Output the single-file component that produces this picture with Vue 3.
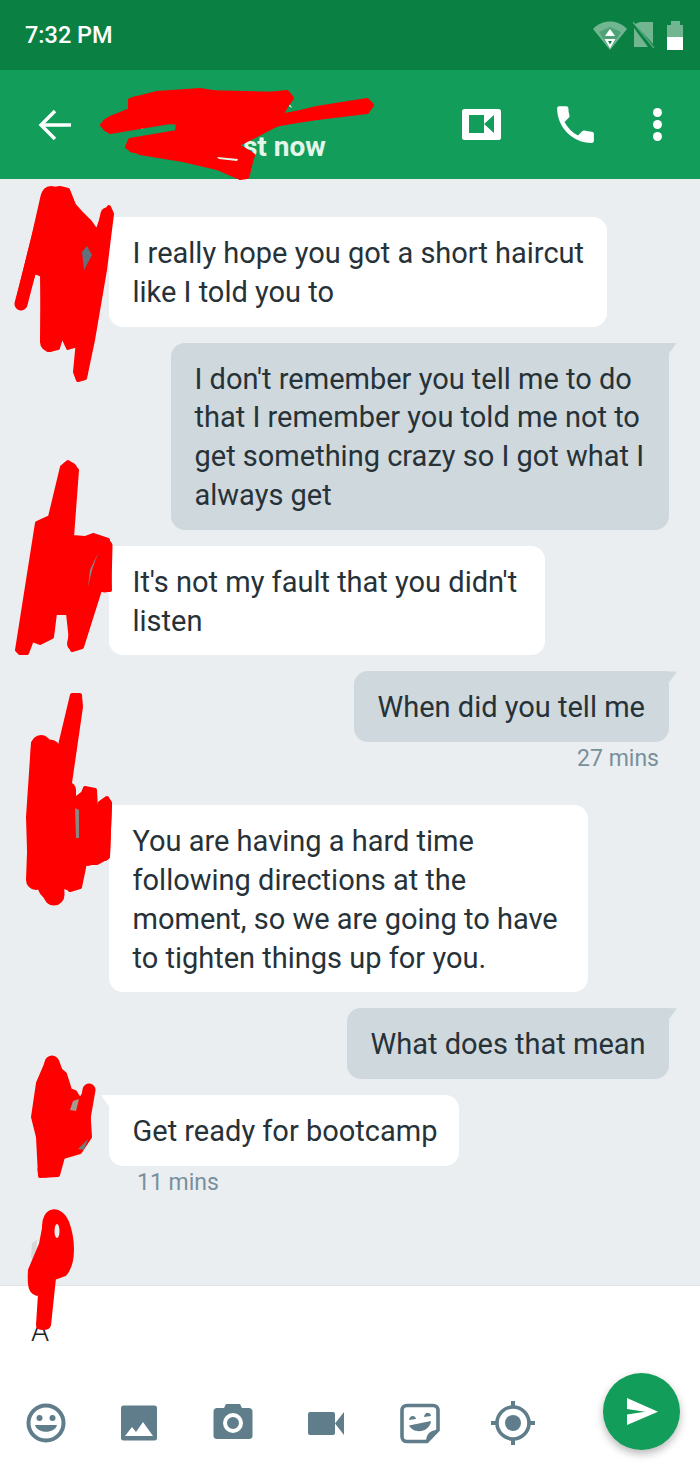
<script setup>
const messages = [
  { id: 1, side: 'in', width: 498, lines: ['I really hope you got a short haircut', 'like I told you to'] },
  {
    id: 2,
    side: 'out',
    width: 498,
    lines: [
      "I don't remember you tell me to do",
      'that I remember you told me not to',
      'get something crazy so I got what I',
      'always get'
    ]
  },
  { id: 3, side: 'in', width: 436, lines: ["It's not my fault that you didn't", 'listen'] },
  { id: 4, side: 'out', width: 315, lines: ['When did you tell me'], time: '27 mins' },
  {
    id: 5,
    side: 'in',
    width: 479,
    lines: [
      'You are having a hard time',
      'following directions at the',
      'moment, so we are going to have',
      'to tighten things up for you.'
    ]
  },
  { id: 6, side: 'out', width: 322, lines: ['What does that mean'] },
  { id: 7, side: 'in', width: 350, lines: ['Get ready for bootcamp'], time: '11 mins' }
]

// marker scribbles over the avatars and the contact name: [path, pen width]
const strokes = [
  // name
  ['M109 125 170 112 230 104', 15],
  ['M137 103 200 97 285 99', 14],
  ['M250 125 320 113 366 105', 12],
  ['M134 146 180 139 240 163', 14],
  ['M185 147 243 171', 13],
  ['M246 156 244 172', 13],
  // avatar 1
  ['M21 304 35 250 47 197', 13],
  ['M51 196 50 342', 20],
  ['M63 196 72 340', 17],
  ['M107 214 95 270 81 374', 13],
  // avatar 2
  ['M69 470 55 540', 17],
  ['M23 647 44 525', 13],
  ['M74 644 85 590 97 545', 14],
  ['M106 546 105 586', 13],
  // avatar 3
  ['M76 699 62 790', 12],
  ['M41 745 36 880', 20],
  ['M50 750 54 895', 21],
  ['M68 790 68 882', 16],
  ['M89 795 88 860', 12],
  ['M106 804 104 855', 12],
  // avatar 4
  ['M89 1090 82 1130', 13],
  ['M52 1063 60 1085', 15],
  ['M45 1170 52 1168', 15]
]

const masses = [
  'M130 100 157 93 200 90 230 95 260 95 287 92 292 98 287 105 280 117 317 108 367 100 372 105 367 112 317 118 280 123 253 137 237 145 253 155 247 177 240 178 217 168 183 160 140 153 127 147 130 140 177 132 178 123 170 122 110 132 102 125 110 118 130 110Z',
  'M46 190 60 188 68 190 74 205 82 214 90 222 97 232 103 215 109 207 112 214 105 270 93 340 85 378 78 380 75 372 80 320 76 345 68 348 62 335 58 348 48 350 44 340 42 275 34 272 24 306 17 304 30 250Z',
  'M17 650 37 523 50 517 62 467 68 462 77 470 72 537 85 538 93 535 108 540 110 590 100 590 82 647 72 650 68 613 55 613 52 637 40 643 32 640 27 653 20 653Z',
  'M72 695 80 695 81 707 70 783 74 800 83 793 85 788 95 790 97 827 100 803 107 798 110 803 108 857 97 863 85 863 80 887 70 890 63 883 60 900 50 902 42 893 38 885 30 883 28 817 33 743 42 738 53 745 57 758Z',
  'M47 1062 58 1068 65 1074 70 1090 75 1092 80 1100 87 1090 90 1137 80 1152 63 1157 58 1175 40 1176 38 1137 33 1117 38 1083Z',
  'M44 1228C43 1208 60 1206 67 1222 73 1238 75 1262 65 1274L54 1278 49 1325C48 1329 38 1329 38 1325L40 1294C30 1294 29 1286 30 1270L41 1244Z'
]
</script>

<template>
  <div class="phone">
    <div class="status-bar">
      <span class="clock">7:32 PM</span>
      <div class="status-icons">
        <svg width="34" height="30" viewBox="0 0 34 30" aria-hidden="true">
          <path d="M0 9C9 -1 25 -1 34 9L17 30Z" fill="#fff" opacity=".42" />
          <path d="M6 12 17 29 28 12 17 7Z" fill="#0b8043" opacity=".35" />
          <path d="M17 9 22 16H12Z" fill="#fff" />
          <path d="M11.5 19H22.5L17 28.5Z" fill="#fff" />
          <path d="M15 21H19L17 24.5Z" fill="#0b8043" />
        </svg>
        <svg class="sim" width="22" height="28" viewBox="0 0 22 28" aria-hidden="true">
          <path d="M7 1H20V23L2 3Z" fill="#fff" opacity=".42" />
          <path d="M1 7 15 26H1Z" fill="#fff" opacity=".42" />
          <path d="M0 1 21 27" stroke="#fff" stroke-opacity=".3" stroke-width="1.5" />
        </svg>
        <div class="battery">
          <span class="battery-nub"></span>
          <span class="battery-empty"></span>
          <span class="battery-full"></span>
        </div>
      </div>
    </div>

    <header class="app-bar">
      <svg class="back" width="34" height="32" viewBox="0 0 34 32" aria-hidden="true">
        <path d="M33 16H3M17 2 3 16 17 30" fill="none" stroke="#fff" stroke-width="3.4" />
      </svg>
      <div class="contact">
        <span class="presence">just now</span>
      </div>
      <div class="bar-actions">
        <svg width="39" height="31" viewBox="0 0 39 31" aria-hidden="true">
          <rect width="39" height="31" rx="2.5" fill="#fff" />
          <path d="M7 6H22V24H7ZM22 15 32 6V24Z" fill="#129d5a" />
        </svg>
        <svg class="call" width="49" height="49" viewBox="0 0 24 24" aria-hidden="true">
          <path
            d="M6.62 10.79c1.44 2.83 3.76 5.14 6.59 6.59l2.2-2.2c.27-.27.67-.36 1.02-.24 1.12.37 2.33.57 3.57.57.55 0 1 .45 1 1V20c0 .55-.45 1-1 1-9.39 0-17-7.61-17-17 0-.55.45-1 1-1h3.5c.55 0 1 .45 1 1 0 1.25.2 2.45.57 3.57.11.35.03.74-.25 1.02l-2.2 2.2z"
            fill="#fff"
          />
        </svg>
        <div class="overflow">
          <span></span><span></span><span></span>
        </div>
      </div>
    </header>

    <main class="thread">
      <template v-for="msg in messages" :key="msg.id">
        <div class="bubble" :class="msg.side" :style="{ width: msg.width + 'px' }">
          <span v-for="line in msg.lines" :key="line" class="line">{{ line }}</span>
        </div>
        <div v-if="msg.time" class="time" :class="msg.side">{{ msg.time }}</div>
      </template>
    </main>

    <footer class="composer">
      <div class="draft">A</div>
      <div class="tools">
        <svg width="44" height="44" viewBox="0 0 44 44" aria-hidden="true">
          <circle cx="22" cy="22" r="17.5" fill="none" stroke="#607d8b" stroke-width="4" />
          <circle cx="15.5" cy="17" r="3" fill="#607d8b" />
          <circle cx="28.5" cy="17" r="3" fill="#607d8b" />
          <path d="M11 24H33C31 33 13 33 11 24Z" fill="#607d8b" />
        </svg>
        <svg width="44" height="44" viewBox="0 0 44 44" aria-hidden="true">
          <rect x="4" y="4.5" width="36" height="35" rx="2.5" fill="#607d8b" />
          <path d="M8 35 15 26 19 31 26 21 36 35Z" fill="#fff" />
        </svg>
        <svg width="44" height="44" viewBox="0 0 44 44" aria-hidden="true">
          <path
            d="M6 7H13L15 3H29L31 7H38C40 7 41.5 8.5 41.5 10.5V35C41.5 37 40 38 38 38H6C4 38 2.5 37 2.5 35V10.5C2.5 8.5 4 7 6 7Z"
            fill="#607d8b"
          />
          <circle cx="22" cy="22" r="8" fill="#607d8b" stroke="#fff" stroke-width="4" />
        </svg>
        <svg width="44" height="44" viewBox="0 0 44 44" aria-hidden="true">
          <rect x="4" y="11" width="27" height="23" rx="2" fill="#607d8b" />
          <path d="M31 22.5 40 11V34Z" fill="#607d8b" />
        </svg>
        <svg width="44" height="44" viewBox="0 0 44 44" aria-hidden="true">
          <path
            d="M9 4.5H35C38 4.5 40 6.5 40 9.5V29L29 40.5H9C6 40.5 4 38.5 4 35.5V9.5C4 6.5 6 4.5 9 4.5Z"
            fill="none"
            stroke="#607d8b"
            stroke-width="3.6"
          />
          <path d="M28 41C28 33 32 29 40 29Z" fill="#607d8b" />
          <path d="M11 19C11.5 14 17.5 14 18 18ZM26 16C26.5 10.5 32.5 10.5 33 15Z" fill="#607d8b" />
          <path d="M11 24.5 33 20C32 31 16 34 11 24.5Z" fill="#607d8b" />
        </svg>
        <svg width="44" height="44" viewBox="0 0 44 44" aria-hidden="true">
          <circle cx="22" cy="22" r="16" fill="none" stroke="#607d8b" stroke-width="3.6" />
          <circle cx="22" cy="22" r="8" fill="#607d8b" />
          <path d="M22 0V6M22 38V44M0 22H6M38 22H44" stroke="#607d8b" stroke-width="4" />
        </svg>
      </div>
      <button type="button" class="send" aria-label="Send">
        <svg width="78" height="78" viewBox="0 0 78 78" aria-hidden="true">
          <path d="M24 25 55 38.7 24 52ZM24 36 42 38.7 24 41.5Z" fill="#fff" fill-rule="evenodd" />
        </svg>
      </button>
    </footer>

    <svg class="marker" width="700" height="1470" viewBox="0 0 700 1470" aria-hidden="true">
      <path d="M282 108C283 102 290 102 292 108L289 106C287 105 285 106 284 108Z" fill="#fff" />
      <path d="M139 124H143V129H139ZM140 152H144V155H140Z" fill="#e6f5ec" />
      <path d="M32 1243 37 1240 36 1262 31 1258Z" fill="#d5d8d8" />
      <path v-for="(d, i) in masses" :key="'m' + i" :d="d" class="mass" />
      <path
        v-for="(s, i) in strokes"
        :key="i"
        :d="s[0]"
        :stroke-width="s[1]"
        class="pen"
      />
      <path d="M217 157 238 159 237 161 219 159Z" fill="#e6f5ec" />
      <path d="M82 252 87 246 92 255 84 270Z" fill="#62717b" />
      <path d="M98 553 92 570 88 587 90 570Z" fill="#8d8a8a" />
      <path d="M75 808 79 810 79 838 76 838Z" fill="#8d8582" />
      <path d="M73 1101 79 1099 76 1111 70 1110Z" fill="#a39a92" />
      <path d="M78 1149 88 1139 84 1150Z" fill="#6f7a72" />
      <ellipse cx="57" cy="1231" rx="2.5" ry="7" fill="#eaeef1" />
    </svg>
  </div>
</template>

<style scoped>
.phone {
  position: relative;
  display: flex;
  flex-direction: column;
  width: 700px;
  height: 1470px;
  overflow: hidden;
  background: #eaeef1;
  font-family: Roboto, "Liberation Sans", sans-serif;
  color: #263238;
}

.status-bar {
  display: flex;
  align-items: center;
  justify-content: space-between;
  flex-shrink: 0;
  height: 70px;
  padding: 0 17px 0 25px;
  box-sizing: border-box;
  background: #0b8043;
  color: #fff;
}

.clock {
  font-size: 23.5px;
  font-weight: 500;
}

.status-icons {
  display: flex;
  align-items: center;
  gap: 12px;
}

.sim {
  margin-left: -6px;
}

.battery {
  display: flex;
  flex-direction: column;
  align-items: center;
  width: 16px;
}

.battery-nub {
  width: 9px;
  height: 4px;
  background: rgba(255, 255, 255, 0.42);
}

.battery-empty {
  width: 16px;
  height: 12px;
  background: rgba(255, 255, 255, 0.42);
}

.battery-full {
  width: 16px;
  height: 13px;
  background: #fff;
}

.app-bar {
  display: flex;
  align-items: center;
  flex-shrink: 0;
  height: 109px;
  padding: 0 38.5px 0 38px;
  box-sizing: border-box;
  background: #129d5a;
}

.contact {
  flex: 1;
  align-self: stretch;
  display: flex;
  flex-direction: column;
  justify-content: flex-end;
  padding: 0 0 17px 148px;
}

.presence {
  font-size: 28px;
  font-weight: 700;
  line-height: 30px;
  white-space: nowrap;
  color: #e4f5ea;
}

.bar-actions {
  display: flex;
  align-items: center;
  gap: 50px;
}

.call {
  margin-right: 2.5px;
}

.overflow {
  display: flex;
  flex-direction: column;
  gap: 3px;
}

.overflow span {
  width: 9px;
  height: 9px;
  border-radius: 50%;
  background: #fff;
}

.thread {
  display: flex;
  flex-direction: column;
  flex: 1;
  padding-top: 22px;
  overflow: hidden;
}

.bubble {
  position: relative;
  box-sizing: border-box;
  margin-top: 16px;
  padding: 17px 0 15px 23.5px;
  border-radius: 14px;
  font-size: 29px;
  line-height: 38.8px;
  white-space: nowrap;
}

.line {
  display: block;
}

.bubble.in {
  align-self: flex-start;
  margin-left: 109px;
  border-top-left-radius: 0;
  background: #fff;
}

.bubble.out {
  align-self: flex-end;
  margin-right: 31px;
  border-top-right-radius: 0;
  background: #cfd8dc;
}

.bubble::before {
  content: "";
  position: absolute;
  top: 0;
  width: 8px;
  height: 11px;
}

.bubble.in::before {
  left: -8px;
  background: #fff;
  clip-path: polygon(0 0, 100% 0, 100% 100%);
}

.bubble.out::before {
  right: -8px;
  background: #cfd8dc;
  clip-path: polygon(0 0, 100% 0, 0 100%);
}

.time {
  height: 32px;
  margin-bottom: 15px;
  font-size: 23px;
  line-height: 34px;
  color: #78909c;
}

.time.out {
  align-self: flex-end;
  margin-right: 41px;
}

.time.in {
  align-self: flex-start;
  margin-left: 137px;
}

.composer {
  flex-shrink: 0;
  height: 185px;
  padding-top: 30px;
  box-sizing: border-box;
  border-top: 1px solid #e0e4e7;
  background: #fff;
}

.draft {
  height: 30px;
  padding-left: 31px;
  font-size: 29px;
  font-weight: 300;
  line-height: 30px;
  color: #1c2326;
}

.tools {
  display: flex;
  align-items: center;
  gap: 49.4px;
  margin-top: 55px;
  padding-left: 24px;
}

.tools svg {
  flex-shrink: 0;
}

.send {
  position: absolute;
  right: 20px;
  bottom: 20px;
  width: 77px;
  height: 77px;
  padding: 0;
  border: none;
  border-radius: 50%;
  background: #129d5a;
  box-shadow: 0 4px 8px rgba(0, 0, 0, 0.28);
}

.send svg {
  display: block;
}

.marker {
  position: absolute;
  top: 0;
  left: 0;
  pointer-events: none;
}

.mass {
  fill: #fe0000;
  stroke: #fe0000;
  stroke-width: 4;
  stroke-linejoin: round;
}

.pen {
  fill: none;
  stroke: #fe0000;
  stroke-linecap: round;
  stroke-linejoin: round;
}
</style>
